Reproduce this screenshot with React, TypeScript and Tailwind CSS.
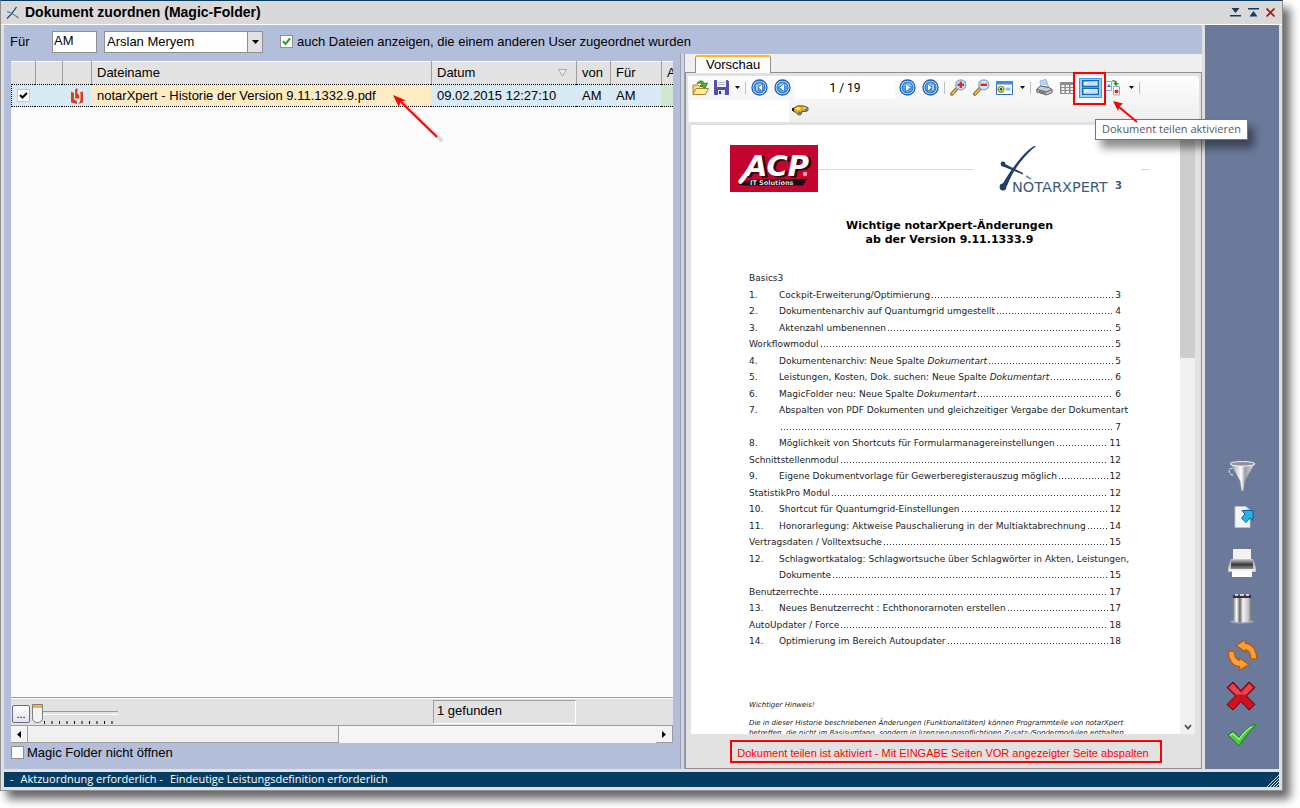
import { ReactNode, useState } from 'react'
import clsx from 'clsx'

interface TocEntry {
  no?: string
  title?: ReactNode
  page?: string
}

const tocEntries: TocEntry[] = [
  { title: 'Basics3' },
  { no: '1.', title: 'Cockpit-Erweiterung/Optimierung', page: '3' },
  { no: '2.', title: 'Dokumentenarchiv auf Quantumgrid umgestellt', page: '4' },
  { no: '3.', title: 'Aktenzahl umbenennen', page: '5' },
  { title: 'Workflowmodul', page: '5' },
  { no: '4.', title: <>Dokumentenarchiv: Neue Spalte <i>Dokumentart</i></>, page: '5' },
  { no: '5.', title: <>Leistungen, Kosten, Dok. suchen: Neue Spalte <i>Dokumentart</i></>, page: '6' },
  { no: '6.', title: <>MagicFolder neu: Neue Spalte <i>Dokumentart</i></>, page: '6' },
  { no: '7.', title: 'Abspalten von PDF Dokumenten und gleichzeitiger Vergabe der Dokumentart' },
  { no: ' ', page: '7' },
  { no: '8.', title: 'Möglichkeit von Shortcuts für Formularmanagereinstellungen', page: '11' },
  { title: 'Schnittstellenmodul', page: '12' },
  { no: '9.', title: 'Eigene Dokumentvorlage für Gewerberegisterauszug möglich', page: '12' },
  { title: 'StatistikPro Modul', page: '12' },
  { no: '10.', title: 'Shortcut für Quantumgrid-Einstellungen', page: '12' },
  { no: '11.', title: 'Honorarlegung: Aktweise Pauschalierung in der Multiaktabrechnung', page: '14' },
  { title: 'Vertragsdaten / Volltextsuche', page: '15' },
  { no: '12.', title: 'Schlagwortkatalog: Schlagwortsuche über Schlagwörter in Akten, Leistungen,' },
  { no: ' ', title: 'Dokumente', page: '15' },
  { title: 'Benutzerrechte', page: '17' },
  { no: '13.', title: 'Neues Benutzerrecht : Echthonorarnoten erstellen', page: '17' },
  { title: 'AutoUpdater / Force', page: '18' },
  { no: '14.', title: 'Optimierung im Bereich Autoupdater', page: '18' },
]

function TocLine({ no, title, page }: TocEntry) {
  return (
    <li className="flex h-4 items-baseline leading-4 whitespace-nowrap">
      {no && <span className="w-[30px] shrink-0">{no}</span>}
      {title && <span>{title}</span>}
      {page && (
        <>
          <span className="mx-[2px] h-px flex-1 bg-[repeating-linear-gradient(90deg,#333_0_1px,transparent_1px_3px)]" />
          <span>{page}</span>
        </>
      )}
    </li>
  )
}

function ToolButton({ label, wide = true, children }: { label: string; wide?: boolean; children: ReactNode }) {
  return (
    <button
      aria-label={label}
      className={clsx('flex h-[22px] shrink-0 items-center justify-center', wide ? 'w-[23px]' : 'w-[19px]')}
    >
      {children}
    </button>
  )
}

function Caret({ label }: { label: string }) {
  return (
    <button aria-label={label} className="flex h-[22px] w-3 shrink-0 items-center justify-center">
      <svg width="5" height="3" viewBox="0 0 5 3"><path d="M0 0h5L2.500 3z" fill="#000" /></svg>
    </button>
  )
}

function Separator() {
  return <div className="mx-[2px] h-3 w-px shrink-0 bg-[#bdbdbd]" />
}

function NavIcon({ d }: { d: string }) {
  return (
    <svg width="17" height="17" viewBox="0 0 17 17">
      <circle cx="8.500" cy="8.500" r="7.500" fill="#fff" stroke="#1a5fb4" strokeWidth="1.300" />
      <circle cx="8.500" cy="8.500" r="5.600" fill="#4aa0ea" stroke="#1667c4" strokeWidth="1" />
      <path d="M4 7a5 5 0 0 1 9 0z" fill="#8cc8f8" />
      <path d={d} fill="#fff" stroke="#1257ae" strokeWidth=".6" />
    </svg>
  )
}

function ZoomIcon({ plus }: { plus?: boolean }) {
  return (
    <svg width="17" height="17" viewBox="0 0 17 17">
      <path d="M1.800 15 7 9.500" stroke="#8a5a14" strokeWidth="3.400" strokeLinecap="round" />
      <path d="M2 14.800 7 9.500" stroke="#f0bc62" strokeWidth="1.800" strokeLinecap="round" />
      <circle cx="10.800" cy="5.800" r="5" fill="#d4e8fb" stroke="#7fa6d8" strokeWidth="1.300" />
      <path d="M7.500 5.800h6.600" stroke="#dc2c1c" strokeWidth="2.400" />
      {plus && <path d="M10.800 2.500v6.600" stroke="#dc2c1c" strokeWidth="2.400" />}
    </svg>
  )
}

function XLogo() {
  return (
    <svg width="14" height="14" viewBox="0 0 14 14" fill="none">
      <path d="M1 12.500C4 10 8 5 10.500 1" stroke="#1d4a6e" strokeWidth="1.300" />
      <path d="M1 5.500C4 6 8 8.500 12.500 12" stroke="#4f7592" strokeWidth="1.100" />
    </svg>
  )
}

// red pointer, tip in the top left corner
function RedArrow({ size, className }: { size: 'lg' | 'sm'; className: string }) {
  return size === 'lg' ? (
    <svg className={className} width="54" height="52" viewBox="0 0 54 52">
      <path d="M11 10 48 46" stroke="#777" strokeOpacity=".25" strokeWidth="4" strokeLinecap="round" />
      <path d="M6 6 44 43" stroke="#f00" strokeWidth="2" />
      <path d="M0 1 13 6.500 7.500 7.500 6 13z" fill="#f00" />
    </svg>
  ) : (
    <svg className={className} width="30" height="28" viewBox="0 0 30 28">
      <path d="M6 6 24 21" stroke="#f00" strokeWidth="2" />
      <path d="M0 0 10 2.500 6.500 5.500 5 10z" fill="#f00" />
    </svg>
  )
}

function TitleBar() {
  return (
    <header className="flex h-[24px] shrink-0 items-center border-b border-white bg-[#d9d9d9] pr-[7px] pl-[5px]">
      <XLogo />
      <h1 className="ml-[5px] text-[14px] font-bold">Dokument zuordnen (Magic-Folder)</h1>
      <div className="ml-auto flex items-center gap-[7px]">
        <button aria-label="Minimieren">
          <svg width="11" height="9" viewBox="0 0 11 9" fill="#0a4068"><path d="M1.500 0h8L5.500 5zM0 7h11v1.500H0z" /></svg>
        </button>
        <button aria-label="Maximieren">
          <svg width="11" height="9" viewBox="0 0 11 9" fill="#0a4068"><path d="M0 0h11v1.500H0zM5.500 3l4 5.500h-8z" /></svg>
        </button>
        <button aria-label="Schließen">
          <svg width="9" height="9" viewBox="0 0 9 9"><path d="M.5.500l8 8M8.500.500l-8 8" stroke="#b01818" strokeWidth="1.800" /></svg>
        </button>
      </div>
    </header>
  )
}

function FilterBar() {
  const [showAll, setShowAll] = useState(true)
  return (
    <div className="flex h-[29px] shrink-0 items-center pl-[6px]">
      <label htmlFor="kuerzel" className="w-[42px] pt-1">Für</label>
      <input
        id="kuerzel"
        defaultValue="AM"
        className="mt-1 h-[22px] w-[45px] border border-[#8f8f8f] bg-white px-px pb-[3px] outline-none"
      />
      <div className="relative mt-1 ml-[7px]">
        <select
          aria-label="Benutzer"
          className="h-[22px] w-[159px] appearance-none border border-[#8f8f8f] bg-white pl-[2px] outline-none"
        >
          <option>Arslan Meryem</option>
        </select>
        <span className="pointer-events-none absolute inset-y-px right-px flex w-[15px] items-center justify-center border-l border-[#8f8f8f] bg-[#e2e2e2]">
          <svg width="7" height="4" viewBox="0 0 7 4"><path d="M0 0h7L3.500 4z" /></svg>
        </span>
      </div>
      <label className="ml-[17px] flex items-center gap-1 pt-1">
        <span className="grid h-[13px] w-[13px] place-items-center">
          <input
            type="checkbox"
            checked={showAll}
            onChange={(e) => setShowAll(e.target.checked)}
            className="col-start-1 row-start-1 h-[13px] w-[13px] appearance-none border border-[#8f8f8f] bg-white"
          />
          {showAll && (
            <svg className="pointer-events-none col-start-1 row-start-1" width="9" height="9" viewBox="0 0 9 9">
              <path d="M1 4.200 3.500 7 8 1.500" fill="none" stroke="#21a121" strokeWidth="2" />
            </svg>
          )}
        </span>
        auch Dateien anzeigen, die einem anderen User zugeordnet wurden
      </label>
    </div>
  )
}

function FileTable() {
  const th = 'h-[23px] overflow-hidden border-l border-[#9d9d9d] px-[5px] text-left font-normal whitespace-nowrap'
  const td = 'h-[23px] overflow-hidden border-y border-dotted border-black px-[6px] whitespace-nowrap'
  return (
    <table className="w-full table-fixed border-separate border-spacing-0">
      <colgroup>
        <col className="w-[24px]" />
        <col className="w-[27px]" />
        <col className="w-[29px]" />
        <col />
        <col className="w-[145px]" />
        <col className="w-[34px]" />
        <col className="w-[51px]" />
        <col className="w-[12px]" />
      </colgroup>
      <thead className="bg-[#e2e2e2] shadow-[inset_0_1px_#fff]">
        <tr>
          <th aria-label="Auswahl" />
          <th aria-label="Status" className={th} />
          <th aria-label="Typ" className={th} />
          <th className={th}>Dateiname</th>
          <th className={th}>
            <span className="flex items-center justify-between">
              Datum
              <svg className="mr-1" width="9" height="8" viewBox="0 0 9 8"><path d="M.5.500h8L4.500 7z" fill="#eee" stroke="#a8a8a8" /></svg>
            </span>
          </th>
          <th className={th}>von</th>
          <th className={th}>Für</th>
          <th className="h-[23px] overflow-hidden border-l border-[#9d9d9d] pl-[5px] text-left font-normal">A</th>
        </tr>
      </thead>
      <tbody>
        <tr className="bg-[#d8eaf6]">
          <td className="h-[23px] border border-r-0 border-dotted border-black">
            <span className="ml-[5px] grid h-[13px] w-[13px] place-items-center">
              <input
                type="checkbox"
                aria-label="Datei auswählen"
                defaultChecked
                className="col-start-1 row-start-1 h-[13px] w-[13px] appearance-none border border-[#c8c8c8] bg-white"
              />
              <svg className="pointer-events-none col-start-1 row-start-1" width="9" height="9" viewBox="0 0 9 9">
                <path d="M1 4 3.500 6.500 8 2" fill="none" stroke="#000" strokeWidth="2" />
              </svg>
            </span>
          </td>
          <td className={td} />
          <td className={td}>
            <svg className="ml-[3px]" width="12" height="16" viewBox="0 0 12 16">
              <path d="M0 3.500 3 5v6l3 2.500V16L0 14.500z" fill="#d8401f" />
              <path d="M4 1.500 6.500 0v6l1.500.5v4H4.500L4 9.500z" fill="#d8401f" />
              <path d="M8.500 4.500 12 3.500v11L6.500 16c2-1 3-2.500 3-5.500V5z" fill="#d8401f" />
            </svg>
          </td>
          <td className={clsx(td, 'bg-[#fdebc4]')}>notarXpert - Historie der Version 9.11.1332.9.pdf</td>
          <td className={td}>09.02.2015 12:27:10</td>
          <td className={td}>AM</td>
          <td className={td}>AM</td>
          <td className={clsx(td, 'bg-[#cfe8cf]')} />
        </tr>
      </tbody>
    </table>
  )
}

function TableFooter() {
  return (
    <div className="flex h-[28px] shrink-0 items-center border-t border-[#9d9d9d] bg-[#e2e2e2] shadow-[inset_0_1px_#fff]">
      <button
        aria-label="Optionen"
        className="mt-[5px] ml-px flex h-[18px] w-[18px] items-end justify-center rounded-[2px] border border-[#6b6b86] bg-linear-to-b from-white to-[#dfe3ec] pb-[3px] text-[11px] leading-[10px]"
      >
        ...
      </button>
      <div className="mt-[5px] ml-[2px] flex flex-col">
        <input
          type="range"
          aria-label="Zeilenhöhe"
          min={0}
          max={9}
          defaultValue={0}
          className="h-[16px] w-[86px] appearance-none bg-transparent [&::-webkit-slider-runnable-track]:h-[4px] [&::-webkit-slider-runnable-track]:border-t [&::-webkit-slider-runnable-track]:border-b [&::-webkit-slider-runnable-track]:border-t-[#9a9a9a] [&::-webkit-slider-runnable-track]:border-b-white [&::-webkit-slider-thumb]:-mt-[8px] [&::-webkit-slider-thumb]:h-[19px] [&::-webkit-slider-thumb]:w-[11px] [&::-webkit-slider-thumb]:appearance-none [&::-webkit-slider-thumb]:rounded-b-[5px] [&::-webkit-slider-thumb]:border [&::-webkit-slider-thumb]:border-[#808080] [&::-webkit-slider-thumb]:bg-[linear-gradient(#f7b233_0_3px,#f4f4f4_3px)]"
        />
        <svg className="ml-3 h-[3px] w-[72px]" viewBox="0 0 72 3">
          <path d="M0 1.500h72" stroke="#000" strokeWidth="3" strokeDasharray="1 6.500" />
        </svg>
      </div>
      <output className="mr-[97px] ml-auto h-[24px] w-[143px] border border-[#9d9d9d] border-r-white border-b-white pl-[3px] leading-[20px]">
        1 gefunden
      </output>
    </div>
  )
}

function HorizontalScrollbar() {
  return (
    <div className="flex h-[18px] shrink-0 border-t border-[#9d9d9d] bg-[#f6f6f6]">
      <button aria-label="Nach links" className="flex w-[17px] items-center justify-center border-r border-b border-[#9d9d9d] bg-[#f3f3f3]">
        <svg width="4" height="7" viewBox="0 0 4 7"><path d="M4 0v7L0 3.500z" /></svg>
      </button>
      <div className="w-[311px] border-r border-b border-[#9d9d9d] bg-[#f0f0f0]" />
      <div className="flex-1" />
      <button aria-label="Nach rechts" className="flex w-[17px] items-center justify-center border-r border-b border-[#9d9d9d] bg-[#f3f3f3]">
        <svg width="4" height="7" viewBox="0 0 4 7"><path d="M0 0v7l4-3.500z" /></svg>
      </button>
    </div>
  )
}

function FilePane() {
  return (
    <section className="relative flex min-w-0 flex-1 flex-col px-[7px] pt-[7px]">
      <div className="flex min-h-0 flex-1 flex-col">
        <div className="min-h-0 flex-1 bg-[#fcfcfc]">
          <FileTable />
        </div>
        <TableFooter />
        <HorizontalScrollbar />
      </div>
      <label className="flex h-[26px] shrink-0 items-start gap-[3px] pt-[2px]">
        <input type="checkbox" className="mt-px h-[13px] w-[13px] appearance-none border border-[#8f8f8f] bg-white" />
        <span className="leading-[16px]">Magic Folder nicht öffnen</span>
      </label>
      <RedArrow size="lg" className="absolute top-[40px] left-[389px]" />
    </section>
  )
}

function PreviewToolbar() {
  return (
    <div className="mx-[2px] mt-[3px] h-[46px] shrink-0 rounded-r bg-linear-to-b from-[#fdfdfd] to-[#efefef] pl-px">
      <div className="flex h-[23px] items-center">
        <ToolButton label="Öffnen">
          <svg width="17" height="17" viewBox="0 0 17 17">
            <path d="M1 15.500V6h5l1.500 1.500H13v8z" fill="#f6dc82" stroke="#a8842c" />
            <path d="M1 15.500 4 9.500h12.500l-3 6z" fill="#fdeea6" stroke="#a8842c" />
            <path d="M5 4.500C7 1 11 1 12.500 4.500l3-.5-2.500 5-5-2.500 2.200-.8C9 4 7 3.500 5 4.500z" fill="#46b52e" stroke="#1f7a16" strokeWidth=".8" />
          </svg>
        </ToolButton>
        <ToolButton label="Speichern" wide={false}>
          <svg width="15" height="15" viewBox="0 0 15 15">
            <path d="M.5.500h13l1 1v13H.5z" fill="#5350a6" stroke="#5350a6" />
            <path d="M3 0h9v7H3z" fill="#f2f3fb" />
            <path d="M4 2.500h7M4 4.500h7" stroke="#b5b7cf" />
            <path d="M4 10h7v5H4z" fill="#e3e5f2" />
            <path d="M5 11h2v3H5z" fill="#37347f" />
          </svg>
        </ToolButton>
        <Caret label="Speicheroptionen" />
        <Separator />
        <ToolButton label="Erste Seite"><NavIcon d="M5 5h2v7H5zM11.500 4.500v8L7 8.500z" /></ToolButton>
        <ToolButton label="Vorherige Seite"><NavIcon d="M10.500 4.300v8.400L5.200 8.500z" /></ToolButton>
        <input
          aria-label="Seite"
          defaultValue="1 / 19"
          className="mx-px h-[22px] w-[100px] min-w-0 bg-white text-center font-['Roboto',sans-serif] text-[12px] outline-none"
        />
        <ToolButton label="Nächste Seite"><NavIcon d="M6.500 4.300v8.400l5.300-4.200z" /></ToolButton>
        <ToolButton label="Letzte Seite"><NavIcon d="M10 5h2v7h-2zM5.500 4.500v8L10 8.500z" /></ToolButton>
        <Separator />
        <ToolButton label="Vergrößern"><ZoomIcon plus /></ToolButton>
        <ToolButton label="Verkleinern"><ZoomIcon /></ToolButton>
        <ToolButton label="Ansicht">
          <svg width="17" height="14" viewBox="0 0 17 14">
            <path d="M.5.500h16v13H.5z" fill="#fff" stroke="#2d6fc0" />
            <path d="M0 0h17v3.500H0z" fill="#3f8be0" />
            <circle cx="5" cy="8.300" r="2.800" fill="#fff" stroke="#a89a14" strokeWidth="1.600" />
            <circle cx="5" cy="8.300" r="1.300" fill="#234" />
            <path d="M9.500 6.500h5v3h-5z" fill="#8ebcf0" />
          </svg>
        </ToolButton>
        <Caret label="Ansichtsoptionen" />
        <Separator />
        <ToolButton label="Drucken">
          <svg width="17" height="17" viewBox="0 0 17 17">
            <path d="M5 8 4 2l6-1.500L12.500 8z" fill="#d8ecfb" stroke="#7aa4cf" strokeWidth=".8" />
            <path d="M5.500 3.500l5-1M6 5.500l5-1" stroke="#7ab0e8" strokeWidth=".8" />
            <path d="M.8 10 4.500 7l8.500 1.500 3.200 2v3L10.500 16 .8 13z" fill="#c9cbd3" stroke="#55575f" strokeWidth=".9" />
            <path d="M1 10.500l9.500 2.500 5.500-2.500M3 12.500l7 2" stroke="#55575f" fill="none" />
          </svg>
        </ToolButton>
        <ToolButton label="Miniaturen">
          <svg width="15" height="12" viewBox="0 0 15 12">
            <path d="M0 0h15v12H0z" fill="#8d8d8d" />
            <path d="M1.500 3h3v2h-3zM6 3h3v2H6zM10.500 3h3v2h-3zM1.500 6h3v2h-3zM6 6h3v2H6zM10.500 6h3v2h-3zM1.500 9h3v2h-3zM6 9h3v2H6zM10.500 9h3v2h-3z" fill="#f4f4f4" />
          </svg>
        </ToolButton>
        <div className="relative">
          <button
            aria-label="Dokument teilen"
            aria-describedby="split-tip"
            className="flex h-[20px] w-[23px] items-center justify-center border border-[#3399ff] bg-[#99ccff]"
          >
            <svg width="17" height="15" viewBox="0 0 17 15">
              <path d="M.75.750h15.500v5.500H.75zM.75 8.250h15.500v6H.75z" fill="#eaf5fe" stroke="#1669b2" strokeWidth="1.500" />
              <path d="M1.500 5.500 8 1.500h7.500v4zM1.500 13.500l6.500-4h7.500v4z" fill="#c3e0f8" />
            </svg>
          </button>
          <div className="pointer-events-none absolute -top-[6px] -left-[6px] h-[33px] w-[33px] border-2 border-[#f00]" />
          <RedArrow size="sm" className="absolute top-[23px] left-[34px] z-20" />
          <div
            id="split-tip"
            role="tooltip"
            className="absolute top-[41px] left-4 z-10 h-[21px] border border-[#767676] bg-white px-[6px] font-['Open_Sans',sans-serif] text-[11px] leading-[18px] whitespace-nowrap text-[#575757] shadow-[6px_8px_8px_rgba(0,0,0,0.45)]"
          >
            Dokument teilen aktivieren
          </div>
        </div>
        <ToolButton label="Seiten drehen">
          <svg width="17" height="17" viewBox="0 0 17 17">
            <path d="M.5 2.500h6v9h-6z" fill="#fff" stroke="#8fa6d8" />
            <path d="M2 8l2-3 2 3z" fill="#2f78d0" />
            <path d="M8.500 7.500h6v8.500h-6z" fill="#fff" stroke="#8fa6d8" />
            <circle cx="11.500" cy="12.500" r="2" fill="#dc2c1c" />
            <path d="M7 1.500c3-.5 5 .5 5 2.500h2l-3 3-3-3h2C10 3 9 2.500 7 2.500z" fill="#2b9a2b" />
          </svg>
        </ToolButton>
        <Caret label="Drehoptionen" />
        <Separator />
      </div>
      <div className="flex h-[23px] items-center">
        <input aria-label="Suchbegriff" className="h-[22px] w-[100px] bg-white outline-none" />
        <ToolButton label="Suchen">
          <svg width="17" height="11" viewBox="0 0 17 11">
            <path d="M1 3.500 6 .8h5l5 1.700v3l-2 .8-4 .2-1 3-2.500.5L4 7.500 1 6z" fill="#e0aa1c" stroke="#5c430c" strokeWidth=".9" />
            <path d="M3 3.500l4-1.500 2 2-3 1.500zM11 2l3 .8-2 1.500z" fill="#ffe680" />
            <circle cx="7.500" cy="8" r="1.600" fill="#3f86c8" />
            <circle cx="14" cy="5" r="1.500" fill="#3f86c8" />
            <path d="M0 3h2v3H0z" fill="#222" />
          </svg>
        </ToolButton>
      </div>
    </div>
  )
}

function DocumentPage() {
  return (
    <article className="min-w-0 flex-1 overflow-hidden bg-white font-['DejaVu_Sans',sans-serif] text-[9px] text-[#1c1c1c]">
      <div className="flex items-start pt-5 pl-[39px]">
        <svg width="88" height="48" viewBox="0 0 88 48">
          <rect width="88" height="47" fill="#c3042e" />
          <path d="M8 39.500 22 34h55l-4 6.500H14z" fill="#1c0a10" />
          <text x="17" y="32" fontFamily="DejaVu Sans" fontWeight="bold" fontStyle="italic" fontSize="29" fill="#2a0a12" stroke="#2a0a12">ACP</text>
          <text x="15" y="31" fontFamily="DejaVu Sans" fontWeight="bold" fontStyle="italic" fontSize="29" fill="#fff">ACP</text>
          <path d="M18 27 10.500 36.500" stroke="#fff" strokeWidth="4.500" strokeLinecap="round" />
          <circle cx="75" cy="29" r="2.200" fill="#e5a9b4" />
          <text x="20" y="39.500" fontFamily="DejaVu Sans" fontWeight="bold" fontSize="6.500" fill="#ddd">IT Solutions</text>
        </svg>
        <div className="mt-6 h-px max-w-[156px] flex-1 bg-[#cfdbe2]" />
        <svg className="ml-[25px]" width="128" height="50" viewBox="0 0 128 50">
          <path d="M37 1C26 10 14 24 8 41l-7 2C10 28 22 9 35 1z" fill="#1e3c6c" />
          <circle cx="4" cy="42" r="3.400" fill="#1e3c6c" />
          <circle cx="4" cy="19" r="2.400" fill="#1e3c6c" />
          <path d="M3 17.500 24 28v1.500L3 21z" fill="#1e3c6c" />
          <path d="M27 31l5 3" stroke="#6f86a8" strokeWidth="1.500" />
          <text x="13" y="47" fontFamily="DejaVu Sans" fontSize="14.500" fill="#3d5a86">NOTARXPERT</text>
          <text x="116" y="44" fontFamily="DejaVu Sans" fontSize="10" fontWeight="bold" fill="#3d5a86">3</text>
        </svg>
        <div className="mt-6 ml-[14px] h-px w-[9px] bg-[#cfdbe2]" />
      </div>
      <h2 className="mt-6 pl-[28px] text-center text-[11px] leading-[14px] font-bold text-black">
        Wichtige notarXpert-Änderungen
        <br />
        ab der Version 9.11.1333.9
      </h2>
      <ul className="mt-[23px] mr-[59px] ml-[58px] flex h-[379px] flex-col justify-between">
        {tocEntries.map((entry, index) => (
          <TocLine key={index} {...entry} />
        ))}
      </ul>
      <div className="mt-[51px] ml-[58px] text-[7px] leading-[10px] whitespace-nowrap italic">
        <p>Wichtiger Hinweis!</p>
        <p className="mt-2">
          Die in dieser Historie beschriebenen Änderungen (Funktionalitäten) können Programmteile von notarXpert
        </p>
        <p>betreffen, die nicht im Basisumfang, sondern in lizenzierungspflichtigen Zusatz-/Sondermodulen enthalten</p>
      </div>
    </article>
  )
}

function PreviewPane() {
  return (
    <section className="flex w-[517px] shrink-0 flex-col bg-[#efefef]">
      <div className="flex h-[19px] shrink-0 items-end border-b border-[#8f8f8f] pl-[10px]">
        <button
          role="tab"
          aria-selected="true"
          className="-mb-px h-[18px] rounded-t-[3px] border-x border-t-2 border-x-[#8f8f8f] border-t-[#fdb827] bg-[#fcfcfc] px-[10px] leading-[16px]"
        >
          Vorschau
        </button>
      </div>
      <div className="flex min-h-0 flex-1 flex-col border-x border-b border-[#8f8f8f] bg-[#e2e2e2]">
        <PreviewToolbar />
        <div className="mt-[3px] mr-[6px] ml-[5px] flex min-h-0 flex-1">
          <DocumentPage />
          <div className="flex w-[15px] shrink-0 flex-col bg-[#f0f0f0]">
            <div className="h-[233px] bg-[#cdcdcd]" />
            <button aria-label="Nach unten" className="mt-auto flex h-[15px] items-center justify-center">
              <svg width="8" height="6" viewBox="0 0 8 6"><path d="M1 1l3 3.500L7 1" fill="none" stroke="#505050" strokeWidth="1.800" /></svg>
            </button>
          </div>
        </div>
        <div className="flex h-[34px] shrink-0 items-start justify-center pt-[6px]">
          <p className="ml-[5px] h-[23px] border-2 border-[#f00] pr-[11px] pl-[5px] text-[11px] leading-[22px] whitespace-nowrap text-[#f00]">
            Dokument teilen ist aktiviert - Mit EINGABE Seiten VOR angezeigter Seite abspalten
          </p>
        </div>
      </div>
    </section>
  )
}

const refreshArrow = 'M8 6.500 17.500.700l-.2 3.600C25 5 29 12 28.500 20l-5.800-.3c.2-5-1.700-8-5.200-9.200l.4 2.700z'

const sideActions: { label: string; box: string; icon: ReactNode }[] = [
  {
    label: 'Filter',
    box: 'h-[40px]',
    icon: (
      <svg width="28" height="31" viewBox="0 0 28 31">
        <path d="M2 2 12 20l1.500 10h2L17 20 27 2z" fill="url(#metal)" stroke="#85878f" strokeWidth=".6" />
        <ellipse cx="14.500" cy="2.800" rx="12.500" ry="2.300" fill="#8f929e" stroke="#f2f2f5" />
        <path d="M4.500 7.500C0 6 0 14 5 14" stroke="#cdd0dc" fill="none" strokeWidth="1.300" strokeDasharray="3 1" />
      </svg>
    ),
  },
  {
    label: 'Exportieren',
    box: 'h-[42px]',
    icon: (
      <svg className="ml-[3px]" width="20" height="22" viewBox="0 0 20 22">
        <path d="M1 .500h11l4 4v17H1z" fill="#f4f6fb" stroke="#b8c0d4" strokeWidth=".8" />
        <path d="M12 .500v4h4" fill="#d2d8e8" />
        <path d="M8 4.500h11v10l-3-2.500-4 4.500-4.500-4.500L11 8z" fill="#29b2e6" stroke="#0b5d94" />
      </svg>
    ),
  },
  {
    label: 'Drucken',
    box: 'h-[50px]',
    icon: (
      <svg width="28" height="30" viewBox="0 0 28 30">
        <path d="M5 1h18v12H5z" fill="#f2f2f2" />
        <path d="M3 11h22l3 9v4H0v-4z" fill="#c4c4c4" />
        <path d="M3 12h22v9H3z" fill="url(#dark)" />
        <path d="M1 21h26v2H1z" fill="#eee" />
        <path d="M4 23h20v6H4z" fill="#fff" />
      </svg>
    ),
  },
  {
    label: 'Löschen',
    box: 'h-[41px]',
    icon: (
      <svg width="24" height="30" viewBox="0 0 24 30">
        <ellipse cx="12" cy="27.500" rx="12" ry="2" fill="#9aa3b8" />
        <path d="M3 2h18v24c0 3-18 3-18 0z" fill="url(#bin)" />
        <path d="M3 1h18v3H3z" fill="#33353b" />
        <path d="M5 1h3M10 1h4M16 1h3" stroke="#cfcfcf" strokeWidth="2" />
      </svg>
    ),
  },
  {
    label: 'Aktualisieren',
    box: 'h-[52px]',
    icon: (
      <svg width="29" height="32" viewBox="0 0 29 32">
        <g fill="#f9a03a" stroke="#b9560b" strokeWidth="1.200" strokeLinejoin="round">
          <path d={refreshArrow} />
          <path d={refreshArrow} transform="rotate(180 14.500 16)" />
        </g>
      </svg>
    ),
  },
  {
    label: 'Abbrechen',
    box: 'h-[30px]',
    icon: (
      <svg className="mr-[2px]" width="30" height="30" viewBox="0 0 30 30">
        <path d="M1 6.500 7 1l8 8.500L23 1l6 5.500L20.500 15l8.500 8.500-6 5.500-8-8.500L7 29l-6-5.500L9.500 15z" fill="#d0101c" stroke="#650008" strokeWidth="1" />
        <path d="M3 6.500 7 3l8 9 8-9 4 3.500-7 7h-10z" fill="#e04a50" />
      </svg>
    ),
  },
  {
    label: 'Bestätigen',
    box: 'h-[48px]',
    icon: (
      <svg width="30" height="24" viewBox="0 0 30 24">
        <path d="M1 12l5-3.500 6 6C16 9 21 4 28 .800l1 1C23 8 18 14 12 23z" fill="#4ecb3c" stroke="#177a14" strokeWidth="1" />
        <path d="M3 12.500l3-2 6 6C15 12 20 6 25 3.500" fill="none" stroke="#a9f09a" strokeWidth="1.300" />
      </svg>
    ),
  },
]

function SideBar() {
  return (
    <nav className="flex w-[74px] shrink-0 flex-col justify-end bg-[#6b7a9b] pb-[10px]">
      <svg className="h-0 w-0">
        <defs>
          <linearGradient id="metal">
            <stop offset="0" stopColor="#8b8e9a" />
            <stop offset=".45" stopColor="#ffffff" />
            <stop offset=".6" stopColor="#9a9da8" />
            <stop offset="1" stopColor="#e4e4ea" />
          </linearGradient>
          <linearGradient id="dark" x2="0" y2="1">
            <stop offset="0" stopColor="#b4b4b4" />
            <stop offset=".5" stopColor="#3a3a3a" />
            <stop offset="1" stopColor="#909090" />
          </linearGradient>
          <linearGradient id="bin">
            <stop offset="0" stopColor="#777" />
            <stop offset=".2" stopColor="#fff" />
            <stop offset=".38" stopColor="#666" />
            <stop offset=".55" stopColor="#f4f4f4" />
            <stop offset=".85" stopColor="#c4c4c4" />
            <stop offset="1" stopColor="#777" />
          </linearGradient>
        </defs>
      </svg>
      {sideActions.map(({ label, box, icon }) => (
        <button key={label} aria-label={label} className={clsx('flex shrink-0 items-center justify-center', box)}>
          {icon}
        </button>
      ))}
    </nav>
  )
}

function StatusBar() {
  return (
    <footer className="mt-[3px] flex h-[15px] shrink-0 items-center justify-between bg-[#073c62] pl-[6px] font-['Open_Sans',sans-serif] text-[11px] text-white">
      <p className="flex gap-[7px]">
        <span>-</span>
        <span>Aktzuordnung erforderlich -</span>
        <span>Eindeutige Leistungsdefinition erforderlich</span>
      </p>
      <svg width="15" height="15" viewBox="0 0 15 15">
        <path d="M3 15 15 3M6 15l9-9M9 15l6-6M12 15l3-3" stroke="#dfe6ec" />
      </svg>
    </footer>
  )
}

export default function App() {
  return (
    <div className="flex h-screen min-h-[640px] w-full overflow-hidden bg-white pr-[17px] pb-[17px] font-['Liberation_Sans',Arial,sans-serif] text-[13px] text-black">
      <div className="flex min-w-0 flex-1 flex-col border border-[#8f8f8f] border-t-[#073c62] bg-[#e0e0e0] pb-[3px] shadow-[7px_8px_9px_rgba(0,0,0,0.6)]">
        <TitleBar />
        <div className="flex min-h-0 flex-1 flex-col px-[3px]">
          <div className="flex min-h-0 flex-1">
            <main className="flex min-w-0 flex-1 flex-col bg-[#b3bedb]">
              <FilterBar />
              <div className="flex min-h-0 flex-1">
                <FilePane />
                <div className="w-[5px] shrink-0 cursor-col-resize border-x border-[#9a9fb0] bg-[#d0d4e0]" />
                <PreviewPane />
              </div>
            </main>
            <div className="w-[3px] shrink-0 bg-[#e0e0e0]" />
            <SideBar />
          </div>
          <StatusBar />
        </div>
      </div>
    </div>
  )
}
